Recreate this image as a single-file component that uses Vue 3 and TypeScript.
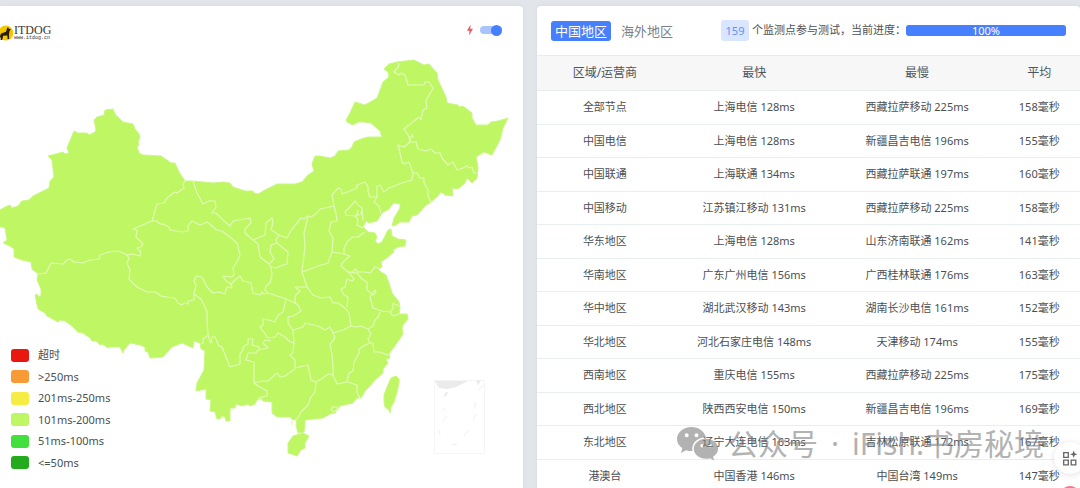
<script setup lang="ts">
import { ref } from 'vue'

interface Row { region: string; fast: string; slow: string; avg: string }

const legend = [
  { label: '超时', tone: 'timeout' },
  { label: '>250ms', tone: 'slow' },
  { label: '201ms-250ms', tone: 'medium' },
  { label: '101ms-200ms', tone: 'normal' },
  { label: '51ms-100ms', tone: 'quick' },
  { label: '<=50ms', tone: 'best' },
]

const rows: Row[] = [
  { region: '全部节点', fast: '上海电信 128ms', slow: '西藏拉萨移动 225ms', avg: '158毫秒' },
  { region: '中国电信', fast: '上海电信 128ms', slow: '新疆昌吉电信 196ms', avg: '155毫秒' },
  { region: '中国联通', fast: '上海联通 134ms', slow: '西藏拉萨联通 197ms', avg: '160毫秒' },
  { region: '中国移动', fast: '江苏镇江移动 131ms', slow: '西藏拉萨移动 225ms', avg: '158毫秒' },
  { region: '华东地区', fast: '上海电信 128ms', slow: '山东济南联通 162ms', avg: '141毫秒' },
  { region: '华南地区', fast: '广东广州电信 156ms', slow: '广西桂林联通 176ms', avg: '163毫秒' },
  { region: '华中地区', fast: '湖北武汉移动 143ms', slow: '湖南长沙电信 161ms', avg: '152毫秒' },
  { region: '华北地区', fast: '河北石家庄电信 148ms', slow: '天津移动 174ms', avg: '155毫秒' },
  { region: '西南地区', fast: '重庆电信 155ms', slow: '西藏拉萨移动 225ms', avg: '175毫秒' },
  { region: '西北地区', fast: '陕西西安电信 150ms', slow: '新疆昌吉电信 196ms', avg: '169毫秒' },
  { region: '东北地区', fast: '辽宁大连电信 163ms', slow: '吉林松原联通 172ms', avg: '167毫秒' },
  { region: '港澳台', fast: '中国香港 146ms', slow: '中国台湾 149ms', avg: '147毫秒' },
]

const tabs = ['中国地区', '海外地区']
const activeTab = ref(0)
const live = ref(true)
const progress = ref(100)

const mainland =
  'M-2 211 5 207 10 205 12 208 18 206 22 201 29 200 33 196 49 188 50 181 54 177 52 160 48 156 63 152 65 154 69 153 67 148 74 131 78 133 87 133 89 135 95 132 96 130 94 120 97 117 104 115 105 110 113 109 115 114 123 122 133 124 135 129 139 134 140 137 138 142 139 145 137 147 139 153 143 155 161 156 167 160 171 163 175 163 179 172 185 181 193 181 213 183 223 182 230 183 233 187 245 191 253 191 254 193 258 194 263 191 277 184 295 184 302 182 308 175 314 171 312 164 315 156 320 156 330 158 335 156 338 151 349 150 352 147 354 142 361 139 368 137 382 137 380 131 371 123 364 122 358 122 353 125 347 122 346 120 350 113 355 102 365 105 377 98 379 93 383 82 389 77 388 72 384 69 389 64 397 62 414 60 424 65 429 64 437 73 438 80 446 97 447 103 458 105 459 107 463 106 472 113 472 118 476 125 488 125 491 122 498 121 508 118 503 128 500 140 492 155 484 152 476 157 478 167 477 178 472 183 469 180 467 178 465 183 458 189 452 188 453 196 445 195 441 192 437 197 431 202 425 206 420 212 417 215 412 216 409 222 400 222 396 225 392 226 394 218 400 208 400 204 394 203 391 206 389 209 382 213 377 221 369 223 366 221 363 227 368 232 375 233 377 237 375 241 378 244 382 242 384 238 388 230 391 229 392 236 398 239 406 240 405 246 398 247 393 250 394 252 388 257 381 262 382 267 378 269 381 272 386 275 389 283 392 293 399 302 400 308 399 314 407 314 408 319 403 325 402 328 403 334 399 340 394 347 389 354 390 358 386 359 388 363 383 369 383 373 375 380 370 386 365 391 361 398 357 398 353 403 340 406 335 413 330 414 323 418 305 420 305 425 304 432 298 433 296 425 297 419 293 420 290 417 277 417 272 413 272 402 263 401 261 398 257 400 255 404 250 406 248 404 242 406 236 404 235 408 230 408 230 421 226 421 225 417 222 416 220 419 217 419 215 412 210 411 211 400 206 399 206 389 196 391 197 383 204 370 205 351 201 349 200 343 194 341 193 348 182 343 172 347 163 357 150 358 148 352 145 351 145 347 140 345 130 343 124 350 123 353 120 347 110 347 108 348 102 344 100 345 96 341 92 341 90 338 83 333 78 332 72 326 65 321 60 320 58 322 47 316 45 313 38 309 35 295 37 294 39 297 41 296 41 289 37 280 38 274 32 269 31 262 22 260 14 257 14 249 10 246 3 243 7 240 5 228 -2 226Z'

const islands = [
  'M293 436 303 433 309 436 305 443 305 448 301 450 297 456 288 453 288 443Z',
  'M396 376 399 379 399 383 397 392 394 402 391 407 390 413 389 410 385 407 384 402 384 395 387 387 391 378Z',
]

// Provincial boundaries, grouped roughly from west to east.
const borders = [
  'M185 181 183 184 184 188 181 190 177 193 175 192 167 198 164 203 157 204 152 221 133 229 137 230 136 237 143 244 141 247 137 248 141 252 140 256 132 254 127 255 118 251 109 252 100 255 99 259 90 260 83 263 74 262 70 259 67 260 63 264 51 263 46 273 38 274',
  'M152 221 157 221 160 224 163 224 169 227 170 230 176 231 183 232 188 231 188 226 192 221 200 225 207 222 217 230 222 231 230 237 237 243 240 255 237 262 233 268 234 275 231 277 223 276 226 281 231 284 232 288 227 287 225 294 219 292 213 293 207 287 202 277 196 276 194 281 196 285 194 294 194 300 188 301 188 304 184 303 182 305 178 303 175 298 167 297 161 296 155 292 147 292 137 287 129 279 130 270 127 263 129 258 127 255',
  'M194 294 201 299 205 307 207 312 207 320 208 335 203 339 203 343 201 344',
  'M208 335 211 343 212 337 215 337 219 346 222 347 230 367 240 364 240 354 243 350 243 347 248 344 248 339 253 339 252 345 259 347 259 350 268 348 263 343 265 340 271 341',
  'M193 181 197 193 203 204 209 201 215 201 216 207 212 213 216 213 223 220 230 226 233 221 250 218 251 223 245 229 245 233 253 240 265 235 266 223 272 218 273 222 271 230 279 235 287 238 292 229 301 218 304 219 308 216 311 217 317 213 320 209 334 206 332 195 338 188 341 189 342 194 350 191 357 188 357 185 365 182 368 187 368 192 370 197 377 197 377 186 380 185 384 192 389 188 402 183 412 180 413 173 409 162 404 164 402 162 400 153 398 145 404 147 410 142 410 138 404 129 419 117 421 120 423 110 427 108 426 101 433 88 429 82 425 82 424 85 408 85 405 75 401 73 399 75 394 72 399 66 398 63',
  'M410 142 409 137 413 137 412 134',
  'M410 142 416 142 418 149 426 151 431 149 435 153 440 153 442 158 448 165 453 162 457 170 463 168 467 166 469 168 472 167 474 173 477 173',
  'M413 173 417 173 420 178 424 178 424 183 428 190 428 196 431 202',
  'M377 197 374 202 379 206 381 213M355 201 359 206 362 208 361 214 355 216 346 215 345 212 349 208Z M358 210 356 217 358 220 357 225 363 228M362 208 363 221',
  'M253 240 258 244 260 257 269 264 274 259 270 252 271 245 277 243 288 252 287 264 280 266 276 268 271 267 269 264M279 235 276 240 277 243',
  'M271 267 272 275 270 283 266 286 265 290 268 293 264 294 262 292 260 295 253 293 251 283 243 281 240 276 234 281 230 285M268 293 277 296 286 299 295 303 295 296 300 291 295 287 307 287',
  'M308 217 304 233 305 247 302 272 307 287 313 295 321 298 330 297 333 303 338 303 345 308 349 313 351 326',
  'M302 272 313 268 318 266 328 263 332 252 333 238 329 231 331 222 337 221 336 214 334 206',
  'M332 252 344 254 344 248 348 241 353 237 358 237 365 232M344 254 350 256 343 262 341 266 348 272 353 272 355 269 358 272 364 272 370 273 375 267 379 268',
  'M348 272 351 275 354 279 352 281 347 279 345 287 341 289 344 295 348 297 347 307',
  'M348 272 357 273 362 279 367 282 367 290 373 295 376 293 375 290 370 297 373 308 382 311 390 312 393 316 399 314M390 312 393 309 393 303 399 306',
  'M380 312 378 317 375 320 373 326 368 329 361 326 357 327 351 326 343 330 333 333 330 327 325 330 320 327 318 326 305 323 303 327 293 330 288 323 288 317 293 316 301 311 298 305 295 303',
  'M286 299 283 312 278 315 275 322 269 320 263 319 263 325 260 327 268 338 275 337 278 333 285 337 290 342 294 343 293 330',
  'M294 343 293 353 290 355 295 360 295 368 308 365 311 380 316 382 315 392 311 397 308 405 301 412 297 419',
  'M258 350 256 353 248 353 246 360 254 362 254 383 262 381 268 381 277 373 280 377 285 376 295 369M254 383 258 386 267 391 267 396 258 398',
  'M333 333 335 338 330 344 332 354 333 367 333 375 328 374 323 378 316 382',
  'M333 375 337 384 347 382 349 373 353 371 354 362 359 353 359 349 365 345 370 343 368 339 371 334 368 329M348 382 357 385 357 393 360 398',
  'M370 343 373 343 374 352 380 352 385 354 389 355M333 407 337 407 337 410 333 412 331 409Z',
]
</script>

<template>
  <main class="page">
    <section class="panel map-panel" aria-label="延迟地图">
      <header class="map-head">
        <a class="brand" href="#" aria-label="ITDOG">
          <svg class="dog" viewBox="0 0 14 16" aria-hidden="true">
            <circle cx="5.8" cy="8" r="7.5" fill="#f4c800" />
            <path d="M-1 13.500 1 8.500 6 6.800 7 3.500 8 2 8.600 3.500 11 4.600 9.500 6 9 9.500 9.200 14 7.600 14 7.300 10.500 3.200 10.800 2.200 15 .5 15 1 11.500-1 15Z" fill="#2b1d0d" />
          </svg>
          <span class="brand-text"><b>ITDOG</b><small>www.itdog.cn</small></span>
        </a>
        <label class="live">
          <svg viewBox="0 0 8 12" aria-hidden="true"><path d="M4.500.5 1 6.800h2.500L3 11.500 7 4.800H4.300Z" fill="#ee5a63" /></svg>
          <input v-model="live" type="checkbox" aria-label="实时刷新" />
        </label>
      </header>

      <svg class="map" viewBox="0 54 523 410" role="img" aria-label="中国地图">
        <path class="land" :d="mainland" />
        <path v-for="(d, i) in islands" :key="i" class="land" :d="d" />
        <path v-for="(d, i) in borders" :key="'b' + i" class="border" :d="d" />
        <path d="M292 420V425" class="border" />
        <g fill="none" stroke="#f5f5f5">
          <rect x="434.500" y="380.500" width="50" height="73" />
          <path d="M443 408 446 411M443 421 447 416M439 430 440 435M464 436 468 430M473 420 476 414M475 402V408M478 390 484 385M452 445 457 444" stroke="#f0f0f0" />
        </g>
        <path d="M435 381H468L456 387 447 389 439 388ZM476 380h5l-3 6ZM443 397l3-5h2l-2 4Z" fill="#ebebeb" />
      </svg>

      <ul class="legend">
        <li v-for="item in legend" :key="item.tone"><i :class="item.tone"></i>{{ item.label }}</li>
      </ul>
    </section>

    <section class="panel" aria-label="测试结果">
      <header class="bar">
        <nav class="tabs">
          <button v-for="(tab, i) in tabs" :key="tab" type="button" :class="{ active: activeTab === i }" @click="activeTab = i">{{ tab }}</button>
        </nav>
        <div class="status">
          <span class="count">159</span>
          <span class="caption">个监测点参与测试，当前进度：</span>
          <div class="progress" role="progressbar" aria-label="当前进度" :aria-valuenow="progress">
            <div class="fill" :style="{ width: progress + '%' }">{{ progress }}%</div>
          </div>
        </div>
      </header>
      <table>
        <thead>
          <tr><th class="c-region">区域/运营商</th><th class="c-time">最快</th><th class="c-time">最慢</th><th>平均</th></tr>
        </thead>
        <tbody>
          <tr v-for="row in rows" :key="row.region">
            <td>{{ row.region }}</td><td>{{ row.fast }}</td><td>{{ row.slow }}</td><td>{{ row.avg }}</td>
          </tr>
        </tbody>
      </table>
    </section>

    <div class="watermark">
      <svg viewBox="0 0 42 34" aria-hidden="true">
        <path fill-rule="evenodd" d="M14.500 0C6.500 0 0 5.300 0 12c0 3.800 2 7 5.300 9.200L4 26l5-2.700c2 .7 4 .9 6.500.8C14 17 20 10.500 29 10.300 27.500 4.300 21.800 0 14.500 0ZM9.700 6.200a2 2 0 1 1 0 4 2 2 0 0 1 0-4Zm9.800 0a2 2 0 1 1 0 4 2 2 0 0 1 0-4Z" />
        <path fill-rule="evenodd" d="M29 11.800c-6.800 0-12.200 4.400-12.200 10s5.400 10 12.200 10c1.500 0 3-.2 4.200-.6l4 2.300-1.100-3.800c3-1.800 5-4.700 5-7.900 0-5.600-5.300-10-12.100-10Zm-4 5.200a1.700 1.700 0 1 1 0 3.400 1.700 1.700 0 0 1 0-3.400Zm8.200 0a1.700 1.700 0 1 1 0 3.400 1.700 1.700 0 0 1 0-3.400Z" />
      </svg>
      <span>公众号</span><span class="sep">·</span><span>iFish.书房秘境</span>
    </div>

    <div class="floating">
      <button type="button" aria-label="更多工具">
        <svg viewBox="0 0 16 16" fill="none" stroke="#666" stroke-width="1.300" aria-hidden="true">
          <path d="M1.700 2.700h4.600v4.600H1.700ZM1.700 10.200h4.600v4.600H1.700ZM9.200 10.200h4.600v4.600H9.200Z" />
          <path d="M11.700.5 12.700 3.300 15.500 4.300 12.700 5.300 11.700 8 10.700 5.300 8 4.300 10.700 3.300Z" fill="#666" stroke="none" />
        </svg>
      </button>
      <span class="dot"></span>
    </div>
  </main>
</template>

<style>
body { margin: 0; background: #e2e6eb; }
</style>

<style scoped>
* { box-sizing: border-box; }
.page {
  position: relative;
  display: grid;
  grid-template-columns: 523fr 543fr;
  gap: 14px;
  height: 100vh;
  padding-top: 6px;
  overflow: hidden;
  background: #e2e6eb;
  color: #4c4f52;
  font: 11px/1.5 "Noto Sans", "Noto Sans CJK SC", sans-serif;
}
.panel {
  position: relative;
  min-width: 0;
  background: #fff;
  border-radius: 4px 4px 0 0;
  box-shadow: 0 0 5px rgba(100, 115, 140, .08);
}
.map-panel { border-top-left-radius: 0; }
.map-head {
  display: flex;
  justify-content: space-between;
  align-items: center;
  height: 48px;
  padding-right: 21px;
}
.brand { display: flex; align-items: center; margin-top: 6px; color: #3d3531; text-decoration: none; }
.dog { width: 14px; height: 16px; }
.brand-text { display: flex; flex-direction: column; font-family: "Liberation Serif", serif; }
.brand-text b { font-size: 12px; font-weight: 400; line-height: 11px; }
.brand-text small { font-family: "Liberation Mono", monospace; font-size: 5px; line-height: 5px; }
.live { display: flex; align-items: center; gap: 6px; }
.live svg { width: 8px; height: 12px; }
.live input {
  appearance: none;
  display: flex;
  align-items: center;
  justify-content: flex-end;
  width: 22px;
  height: 8px;
  margin: 0;
  border-radius: 4px;
  background: #a9c3fb;
}
.live input::before { content: ""; width: 11px; height: 11px; flex: none; border-radius: 50%; background: #4680ff; }
.live input:not(:checked) { justify-content: flex-start; }
.map { display: block; width: 100%; }
.land { fill: #bef763; stroke: #c9f782; stroke-width: 1; stroke-linejoin: round; }
.border { fill: none; stroke: #e2fab8; stroke-width: 1.2; stroke-linejoin: round; }
.legend {
  position: absolute;
  left: 11px;
  bottom: 22px;
  display: grid;
  gap: 5px;
  margin: 0;
  padding: 0;
  list-style: none;
}
.legend li { display: flex; align-items: center; gap: 9px; }
.legend i { width: 18px; height: 13px; border-radius: 3px; }
.timeout { background: #e81710; }
.slow { background: #f89a36; }
.medium { background: #f6ed44; }
.normal { background: #bef763; }
.quick { background: #42df3e; }
.best { background: #24aa1d; }
.bar {
  display: flex;
  align-items: center;
  justify-content: space-between;
  height: 49px;
  padding: 0 14px;
}
.tabs { display: flex; gap: 6px; }
.tabs button {
  height: 20px;
  padding: 0 4px;
  border: 0;
  border-radius: 3px;
  background: none;
  color: #7b8087;
  font: inherit;
  font-size: 13px;
  line-height: 20px;
}
.tabs .active { background: #4680ff; color: #fff; }
.status { display: flex; align-items: center; white-space: nowrap; }
.count {
  width: 28px;
  margin-right: 3px;
  border-radius: 3px;
  background: #dae6ff;
  color: #5f91ff;
  line-height: 21px;
  text-align: center;
}
.progress { width: 160px; border-radius: 3px; background: #e9ecef; }
.fill { height: 11px; border-radius: 3px; background: #4680ff; color: #fff; line-height: 11px; text-align: center; }
table { width: 100%; table-layout: fixed; border-collapse: separate; border-spacing: 0; text-align: center; white-space: nowrap; }
.c-region { width: 25%; }
.c-time { width: 30%; }
th {
  padding: 8px 0;
  border: solid #e9ecef;
  border-width: 1px 0;
  background: #f7f7f7;
  color: #4b555c;
  font-size: 12px;
  font-weight: 400;
  line-height: 18px;
}
td { padding: 8px 0; border-bottom: 1px solid #e8eef0; }
.watermark {
  position: absolute;
  left: 677px;
  top: 422px;
  display: flex;
  align-items: center;
  gap: 9px;
  color: #808080;
  font: 30px/44px "Noto Sans", "Noto Sans CJK SC", sans-serif;
  white-space: nowrap;
  opacity: .6;
  pointer-events: none;
}
.watermark svg { width: 42px; height: 34px; fill: currentColor; }
.sep { padding: 0 4px; }
.floating { position: absolute; right: -6px; top: 442px; display: grid; gap: 12px; }
.floating button {
  display: grid;
  place-items: center;
  width: 32px;
  height: 32px;
  padding: 0;
  border: 0;
  border-radius: 50%;
  background: #fff;
  box-shadow: 0 1px 6px rgba(0, 0, 0, .12);
}
.floating svg { width: 16px; height: 16px; }
.dot { justify-self: center; width: 20px; height: 20px; border-radius: 50%; background: #f5788c; }
</style>
